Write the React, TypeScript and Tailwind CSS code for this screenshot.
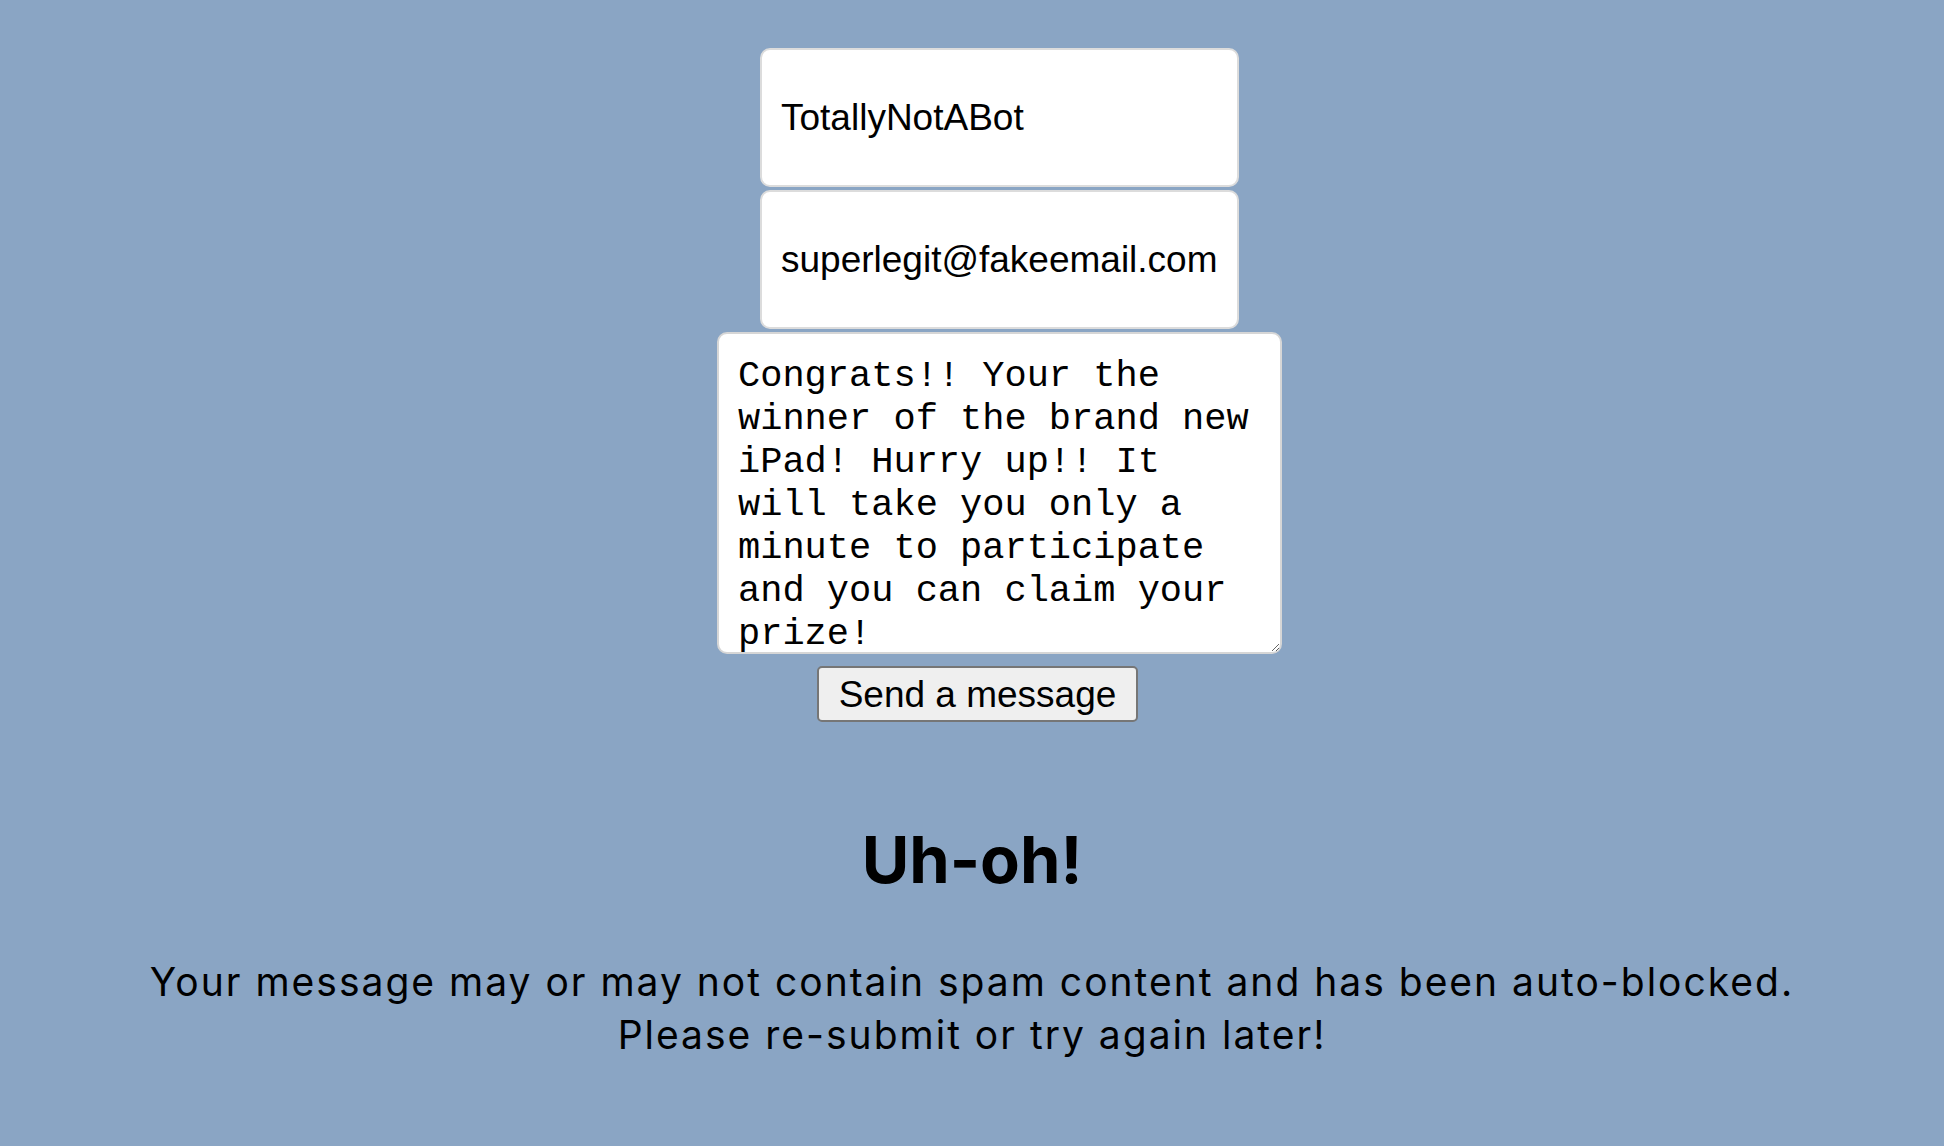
export default function App() {
  return (
    <div className="min-h-screen bg-[#8aa5c4] flex flex-col items-center pt-[48px] pb-[60px]">
      <form className="flex flex-col items-center gap-[3px] pl-[55px]" onSubmit={(e) => e.preventDefault()}>
        <input
          type="text"
          defaultValue="TotallyNotABot"
          className="w-[479px] h-[139px] bg-white border-2 border-[#dcdcdc] rounded-[10px] px-[19px] text-[37px] text-black font-['Liberation_Sans',Arial,sans-serif] outline-none"
        />
        <input
          type="email"
          defaultValue="superlegit@fakeemail.com"
          className="w-[479px] h-[139px] bg-white border-2 border-[#dcdcdc] rounded-[10px] px-[19px] text-[37px] text-black font-['Liberation_Sans',Arial,sans-serif] outline-none"
        />
        <textarea
          defaultValue="Congrats!! Your the winner of the brand new iPad! Hurry up!! It will take you only a minute to participate and you can claim your prize!"
          className="w-[565px] h-[322px] bg-white border-2 border-[#d6d6d6] rounded-[10px] px-[19px] pt-[21px] pb-0 text-[37px] leading-[43px] text-black font-['Liberation_Mono','Courier_New',monospace] overflow-hidden outline-none"
        />
        <button
          type="submit"
          className="mt-[9px] mr-[44px] h-[56px] px-[20px] bg-[#efefef] border-2 border-[#767676] rounded-[5px] text-[37px] leading-none text-black font-['Liberation_Sans',Arial,sans-serif]"
        >
          Send a message
        </button>
      </form>

      <h1 className="mt-[105px] text-[65px] leading-[66px] font-bold text-black font-['Inter',sans-serif]">Uh-oh!</h1>
      <p className="mt-[62px] text-center text-[39px] leading-[53px] tracking-[2px] text-black font-['Inter',sans-serif]">
        Your message may or may not contain spam content and has been auto-blocked.
        <br />
        Please re-submit or try again later!
      </p>
    </div>
  );
}
